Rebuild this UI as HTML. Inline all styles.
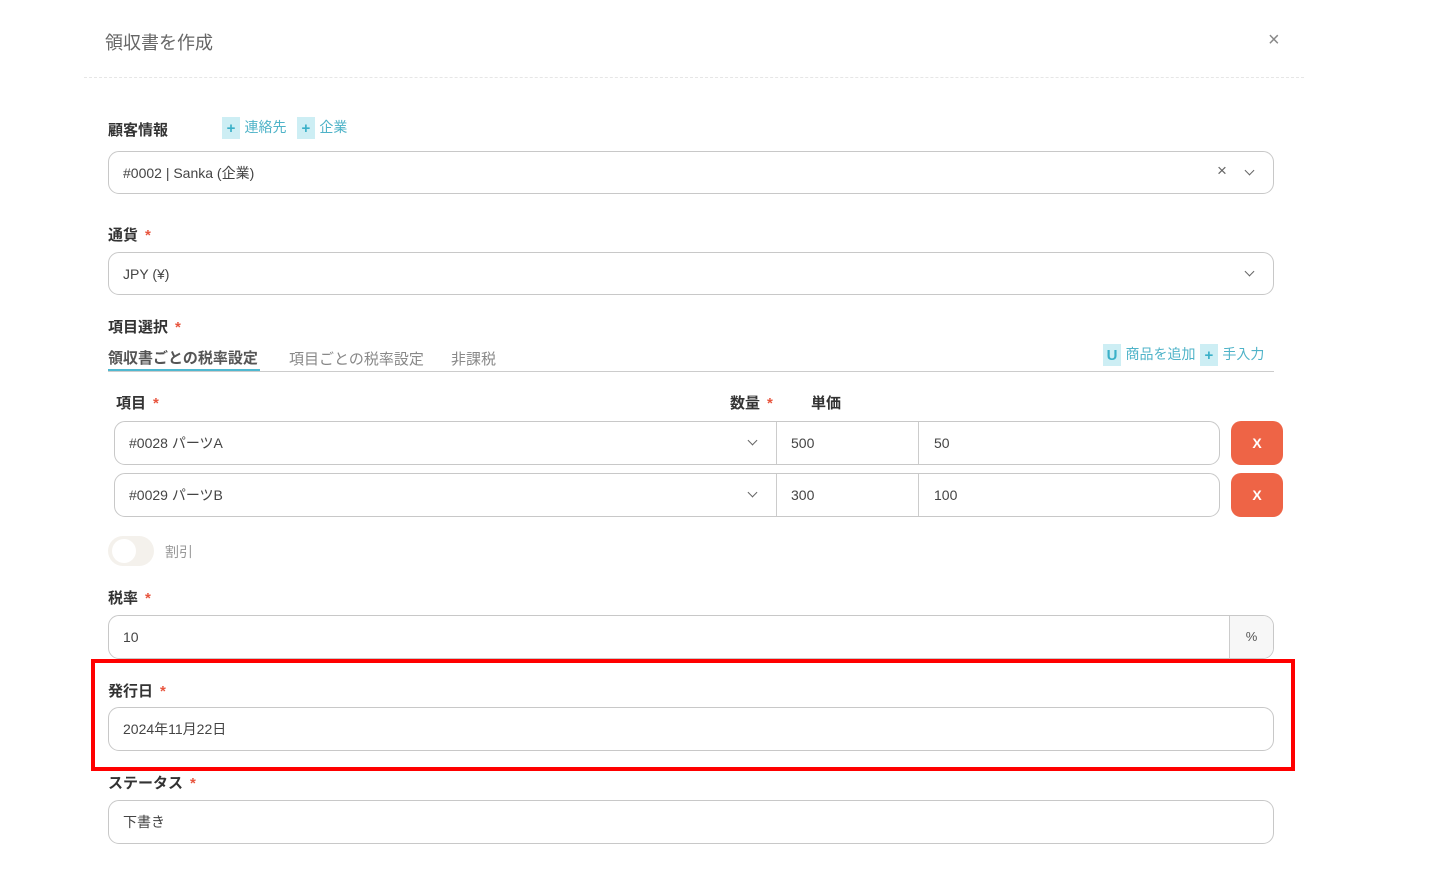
<!DOCTYPE html>
<html><head><meta charset="utf-8"><style>
*{box-sizing:border-box;margin:0;padding:0}
body{width:1452px;height:881px;background:#fff;font-family:"Liberation Sans","Noto Sans CJK JP",sans-serif;color:#333;position:relative;overflow:hidden}
.a{position:absolute}
.lbl{font-size:15px;font-weight:bold;color:#333}
.req{color:#e8553e;margin-left:7px}
.inp{position:absolute;border:1px solid #c8c8c8;border-radius:11px;background:#fff;font-size:14px;color:#444;padding-left:14px;display:flex;align-items:center}
.chev{position:absolute;width:7px;height:7px;border-right:1.5px solid #666;border-bottom:1.5px solid #666;transform:rotate(45deg)}
.ib{display:inline-block;width:18px;height:22px;background:#cdeef4;color:#3ab0c8;font-weight:bold;text-align:center;font-size:15px;line-height:24px;vertical-align:middle}
.teal{color:#4fb3c8;font-size:14px}
.xb{position:absolute;width:52px;height:44px;background:#ee6446;border-radius:10px;color:#fff;font-weight:bold;font-size:14px;display:flex;align-items:center;justify-content:center}
</style></head><body>
<div class="a" style="left:105px;top:29px;font-size:18px;color:#666">領収書を作成</div>
<div class="a" style="left:1268px;top:29px;font-size:20px;color:#888">×</div>
<div class="a" style="left:84px;top:77px;width:1220px;border-top:1px dashed #e6e6e6"></div>

<div class="a lbl" style="left:108px;top:119px">顧客情報</div>
<div class="a" style="left:222px;top:117px"><span class="ib">+</span> <span class="teal">連絡先</span> <span class="ib" style="margin-left:6px">+</span> <span class="teal">企業</span></div>
<div class="inp" style="left:108px;top:151px;width:1166px;height:43px">#0002 | Sanka (企業)</div>
<div class="a" style="left:1217px;top:161px;font-size:17px;color:#666">×</div>
<div class="chev" style="left:1246px;top:167px"></div>

<div class="a lbl" style="left:108px;top:224px">通貨<span class="req">*</span></div>
<div class="inp" style="left:108px;top:252px;width:1166px;height:43px">JPY (¥)</div>
<div class="chev" style="left:1246px;top:268px"></div>

<div class="a lbl" style="left:108px;top:316px">項目選択<span class="req">*</span></div>
<div class="a" style="left:108px;top:347px;font-size:15px;font-weight:bold;color:#555">領収書ごとの税率設定</div>
<div class="a" style="left:108px;top:369px;width:152px;height:2px;background:#4fb8d0"></div>
<div class="a" style="left:289px;top:348px;font-size:15px;color:#888">項目ごとの税率設定</div>
<div class="a" style="left:451px;top:348px;font-size:15px;color:#888">非課税</div>
<div class="a" style="left:108px;top:371px;width:1166px;border-top:1px solid #ccc"></div>
<div class="a" style="left:1103px;top:344px"><span class="ib">U</span> <span class="teal">商品を追加</span> <span class="ib">+</span> <span class="teal">手入力</span></div>

<div class="a lbl" style="left:116px;top:392px">項目<span class="req">*</span></div>
<div class="a lbl" style="left:730px;top:392px">数量<span class="req">*</span></div>
<div class="a lbl" style="left:811px;top:392px">単価</div>

<div class="inp" style="left:114px;top:421px;width:1106px;height:44px">#0028 パーツA</div>
<div class="chev" style="left:749px;top:437px"></div>
<div class="a" style="left:776px;top:422px;height:42px;border-left:1px solid #ccc"></div>
<div class="a" style="left:918px;top:422px;height:42px;border-left:1px solid #ccc"></div>
<div class="a" style="left:791px;top:435px;font-size:14px;color:#444">500</div>
<div class="a" style="left:934px;top:435px;font-size:14px;color:#444">50</div>
<div class="xb" style="left:1231px;top:421px">X</div>

<div class="inp" style="left:114px;top:473px;width:1106px;height:44px">#0029 パーツB</div>
<div class="chev" style="left:749px;top:489px"></div>
<div class="a" style="left:776px;top:474px;height:42px;border-left:1px solid #ccc"></div>
<div class="a" style="left:918px;top:474px;height:42px;border-left:1px solid #ccc"></div>
<div class="a" style="left:791px;top:487px;font-size:14px;color:#444">300</div>
<div class="a" style="left:934px;top:487px;font-size:14px;color:#444">100</div>
<div class="xb" style="left:1231px;top:473px">X</div>

<div class="a" style="left:108px;top:536px;width:46px;height:30px;border-radius:15px;background:#f4f1ec"></div>
<div class="a" style="left:112px;top:539px;width:24px;height:24px;border-radius:12px;background:#fff"></div>
<div class="a" style="left:165px;top:542px;font-size:14px;color:#999">割引</div>

<div class="a lbl" style="left:108px;top:587px">税率<span class="req">*</span></div>
<div class="inp" style="left:108px;top:615px;width:1166px;height:44px">10</div>
<div class="a" style="left:1229px;top:616px;width:44px;height:42px;border-left:1px solid #ccc;background:#f7f7f7;border-radius:0 10px 10px 0;font-size:13px;color:#555;text-align:center;line-height:42px">%</div>

<div class="a" style="left:91px;top:659px;width:1204px;height:112px;border:4px solid #f00"></div>
<div class="a lbl" style="left:108px;top:680px">発行日<span class="req">*</span></div>
<div class="inp" style="left:108px;top:707px;width:1166px;height:44px">2024年11月22日</div>

<div class="a lbl" style="left:108px;top:772px">ステータス<span class="req">*</span></div>
<div class="inp" style="left:108px;top:800px;width:1166px;height:44px">下書き</div>
</body></html>
